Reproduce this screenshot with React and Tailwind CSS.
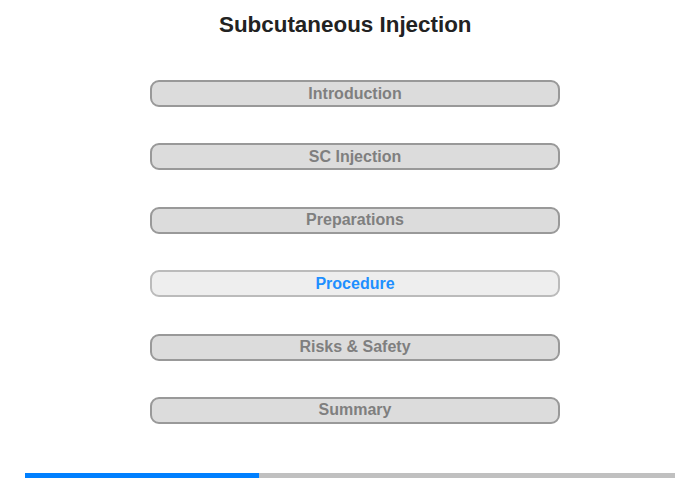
import React from "react";

const sections = [
  "Introduction",
  "SC Injection",
  "Preparations",
  "Procedure",
  "Risks & Safety",
  "Summary",
];

const App = () => {
  const current = "Procedure";

  return (
    <div className="w-[700px] h-[480px] bg-white flex flex-col font-['Liberation_Sans',Arial,sans-serif]">
      <h1 className="pt-[11px] pl-[219px] text-[22.4px] leading-[28px] font-bold text-[#222222]">
        Subcutaneous Injection
      </h1>

      <div className="mt-[41px] ml-[150px] w-[410px] flex flex-col gap-[36.4px]">
        {sections.map((name) => {
          const active = name === current;
          return (
            <button
              key={name}
              className={
                active
                  ? "h-[27px] rounded-[9px] border-2 border-[#bbbbbb] bg-[#eeeeee] text-[#1e8fff] text-[16px] font-bold leading-none"
                  : "h-[27px] rounded-[9px] border-2 border-[#999999] bg-[#dcdcdc] text-[#7f7f7f] text-[16px] font-bold leading-none"
              }
            >
              {name}
            </button>
          );
        })}
      </div>

      <div className="mt-auto mb-[2px] mx-[25px] h-[5px] flex bg-[#c0c0c0]">
        <div className="w-[234px] bg-[#0080ff]" />
      </div>
    </div>
  );
};

export default App;
